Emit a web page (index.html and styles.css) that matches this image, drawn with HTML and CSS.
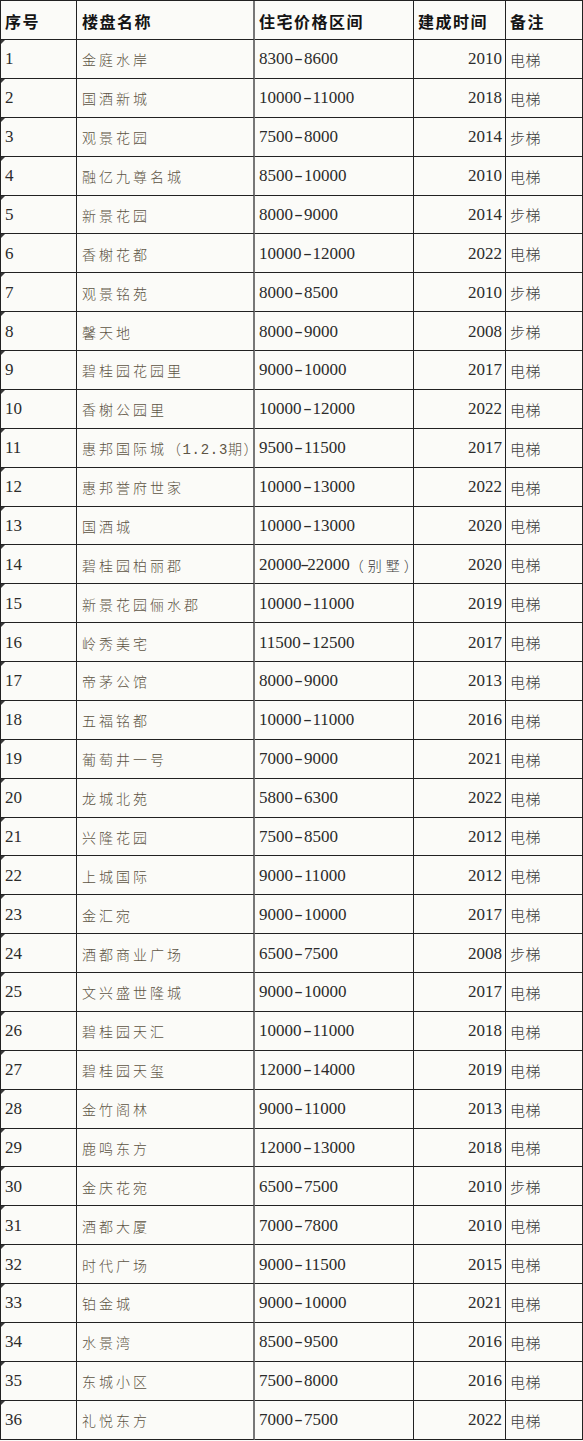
FILE: index.html
```html
<!DOCTYPE html>
<html lang="zh">
<head>
<meta charset="utf-8">
<title>楼盘价格表</title>
<link rel="stylesheet" href="styles.css">
</head>
<body>
<div class="sheet">
  <div class="c h idx">序号</div><div class="c h name">楼盘名称</div><div class="c h price">住宅价格区间</div><div class="c h year">建成时间</div><div class="c h note">备注</div>

  <div class="c idx">1</div><div class="c name">金庭水岸</div><div class="c price">8300<span class="d">-</span>8600</div><div class="c year">2010</div><div class="c note">电梯</div>
  <div class="c idx">2</div><div class="c name">国酒新城</div><div class="c price">10000<span class="d">-</span>11000</div><div class="c year">2018</div><div class="c note">电梯</div>
  <div class="c idx">3</div><div class="c name">观景花园</div><div class="c price">7500<span class="d">-</span>8000</div><div class="c year">2014</div><div class="c note">步梯</div>
  <div class="c idx">4</div><div class="c name">融亿九尊名城</div><div class="c price">8500<span class="d">-</span>10000</div><div class="c year">2010</div><div class="c note">电梯</div>
  <div class="c idx">5</div><div class="c name">新景花园</div><div class="c price">8000<span class="d">-</span>9000</div><div class="c year">2014</div><div class="c note">步梯</div>
  <div class="c idx">6</div><div class="c name">香榭花都</div><div class="c price">10000<span class="d">-</span>12000</div><div class="c year">2022</div><div class="c note">电梯</div>
  <div class="c idx">7</div><div class="c name">观景铭苑</div><div class="c price">8000<span class="d">-</span>8500</div><div class="c year">2010</div><div class="c note">步梯</div>
  <div class="c idx">8</div><div class="c name">馨天地</div><div class="c price">8000<span class="d">-</span>9000</div><div class="c year">2008</div><div class="c note">步梯</div>
  <div class="c idx">9</div><div class="c name">碧桂园花园里</div><div class="c price">9000<span class="d">-</span>10000</div><div class="c year">2017</div><div class="c note">电梯</div>
  <div class="c idx">10</div><div class="c name">香榭公园里</div><div class="c price">10000<span class="d">-</span>12000</div><div class="c year">2022</div><div class="c note">电梯</div>
  <div class="c idx">11</div><div class="c name">惠邦国际城<span class="tight">（<span class="asc">1.2.3</span>期）</span></div><div class="c price">9500<span class="d">-</span>11500</div><div class="c year">2017</div><div class="c note">电梯</div>
  <div class="c idx">12</div><div class="c name">惠邦誉府世家</div><div class="c price">10000<span class="d">-</span>13000</div><div class="c year">2022</div><div class="c note">电梯</div>
  <div class="c idx">13</div><div class="c name">国酒城</div><div class="c price">10000<span class="d">-</span>13000</div><div class="c year">2020</div><div class="c note">电梯</div>
  <div class="c idx">14</div><div class="c name">碧桂园柏丽郡</div><div class="c price">20000<span class="d">-</span>22000<span class="cjk">（别墅）</span></div><div class="c year">2020</div><div class="c note">电梯</div>
  <div class="c idx">15</div><div class="c name">新景花园俪水郡</div><div class="c price">10000<span class="d">-</span>11000</div><div class="c year">2019</div><div class="c note">电梯</div>
  <div class="c idx">16</div><div class="c name">岭秀美宅</div><div class="c price">11500<span class="d">-</span>12500</div><div class="c year">2017</div><div class="c note">电梯</div>
  <div class="c idx">17</div><div class="c name">帝茅公馆</div><div class="c price">8000<span class="d">-</span>9000</div><div class="c year">2013</div><div class="c note">电梯</div>
  <div class="c idx">18</div><div class="c name">五福铭都</div><div class="c price">10000<span class="d">-</span>11000</div><div class="c year">2016</div><div class="c note">电梯</div>
  <div class="c idx">19</div><div class="c name">葡萄井一号</div><div class="c price">7000<span class="d">-</span>9000</div><div class="c year">2021</div><div class="c note">电梯</div>
  <div class="c idx">20</div><div class="c name">龙城北苑</div><div class="c price">5800<span class="d">-</span>6300</div><div class="c year">2022</div><div class="c note">电梯</div>
  <div class="c idx">21</div><div class="c name">兴隆花园</div><div class="c price">7500<span class="d">-</span>8500</div><div class="c year">2012</div><div class="c note">电梯</div>
  <div class="c idx">22</div><div class="c name">上城国际</div><div class="c price">9000<span class="d">-</span>11000</div><div class="c year">2012</div><div class="c note">电梯</div>
  <div class="c idx">23</div><div class="c name">金汇宛</div><div class="c price">9000<span class="d">-</span>10000</div><div class="c year">2017</div><div class="c note">电梯</div>
  <div class="c idx">24</div><div class="c name">酒都商业广场</div><div class="c price">6500<span class="d">-</span>7500</div><div class="c year">2008</div><div class="c note">步梯</div>
  <div class="c idx">25</div><div class="c name">文兴盛世隆城</div><div class="c price">9000<span class="d">-</span>10000</div><div class="c year">2017</div><div class="c note">电梯</div>
  <div class="c idx">26</div><div class="c name">碧桂园天汇</div><div class="c price">10000<span class="d">-</span>11000</div><div class="c year">2018</div><div class="c note">电梯</div>
  <div class="c idx">27</div><div class="c name">碧桂园天玺</div><div class="c price">12000<span class="d">-</span>14000</div><div class="c year">2019</div><div class="c note">电梯</div>
  <div class="c idx">28</div><div class="c name">金竹阁林</div><div class="c price">9000<span class="d">-</span>11000</div><div class="c year">2013</div><div class="c note">电梯</div>
  <div class="c idx">29</div><div class="c name">鹿鸣东方</div><div class="c price">12000<span class="d">-</span>13000</div><div class="c year">2018</div><div class="c note">电梯</div>
  <div class="c idx">30</div><div class="c name">金庆花宛</div><div class="c price">6500<span class="d">-</span>7500</div><div class="c year">2010</div><div class="c note">步梯</div>
  <div class="c idx">31</div><div class="c name">酒都大厦</div><div class="c price">7000<span class="d">-</span>7800</div><div class="c year">2010</div><div class="c note">电梯</div>
  <div class="c idx">32</div><div class="c name">时代广场</div><div class="c price">9000<span class="d">-</span>11500</div><div class="c year">2015</div><div class="c note">电梯</div>
  <div class="c idx">33</div><div class="c name">铂金城</div><div class="c price">9000<span class="d">-</span>10000</div><div class="c year">2021</div><div class="c note">电梯</div>
  <div class="c idx">34</div><div class="c name">水景湾</div><div class="c price">8500<span class="d">-</span>9500</div><div class="c year">2016</div><div class="c note">电梯</div>
  <div class="c idx">35</div><div class="c name">东城小区</div><div class="c price">7500<span class="d">-</span>8000</div><div class="c year">2016</div><div class="c note">电梯</div>
  <div class="c idx">36</div><div class="c name">礼悦东方</div><div class="c price">7000<span class="d">-</span>7500</div><div class="c year">2022</div><div class="c note">电梯</div>
</div>
</body>
</html>
```

FILE: styles.css
```css
html, body {
  margin: 0;
  padding: 0;
  background: #fbfbf8;
}

.sheet {
  display: grid;
  grid-template-columns: 76px 178px 159px 92px 77px;
  grid-template-rows: 39px repeat(36, 38.89px);
  width: 583px;
  box-sizing: border-box;
  border-top: 1px solid #222;
  border-left: 1px solid #222;
  background: #fbfbf8;
  font-family: "Liberation Serif", "Noto Sans CJK SC", serif;
  font-size: 17px;
  color: #2b2b2b;
}

.c {
  position: relative;
  box-sizing: border-box;
  border-right: 1px solid #222;
  border-bottom: 1px solid #222;
  display: flex;
  align-items: center;
  white-space: nowrap;
  overflow: visible;
  padding-top: 1px;
}

.h {
  font-family: "Noto Sans CJK SC", sans-serif;
  font-weight: 700;
  font-size: 16px;
  letter-spacing: 1.5px;
  color: #141414;
}

.idx {
  padding-left: 4px;
}

.idx:not(.h)::before {
  content: "";
  position: absolute;
  top: 0;
  left: 0;
  border-top: 4px solid #3a3a3a;
  border-right: 4px solid transparent;
}

.name {
  padding-left: 5px;
  border-right: 2px solid #777;
}

.name:not(.h) {
  font-family: "Noto Sans CJK SC", sans-serif;
  font-weight: 300;
  font-size: 14px;
  letter-spacing: 3px;
  color: #5d5444;
}

.tight {
  letter-spacing: 1.5px;
}

.tight .asc {
  font-family: "Liberation Mono", monospace;
  font-size: 14px;
  letter-spacing: 0.7px;
}

.price {
  padding-left: 4px;
}

.d {
  display: inline-block;
  width: 11px;
  text-align: center;
  font-family: "Liberation Sans", sans-serif;
  transform: scaleX(1.6);
}

.cjk {
  font-family: "Noto Sans CJK SC", sans-serif;
  font-weight: 300;
  font-size: 14px;
  letter-spacing: 4px;
  color: #3a3a3a;
}

.year {
  justify-content: flex-end;
  padding-right: 3px;
}

.h.year {
  justify-content: flex-start;
  padding-left: 4px;
  padding-right: 0;
}

.note {
  padding-left: 4px;
}

.note:not(.h) {
  font-family: "Noto Sans CJK SC", sans-serif;
  font-weight: 300;
  font-size: 15px;
  letter-spacing: 0.5px;
  color: #3f3f3f;
}
```
